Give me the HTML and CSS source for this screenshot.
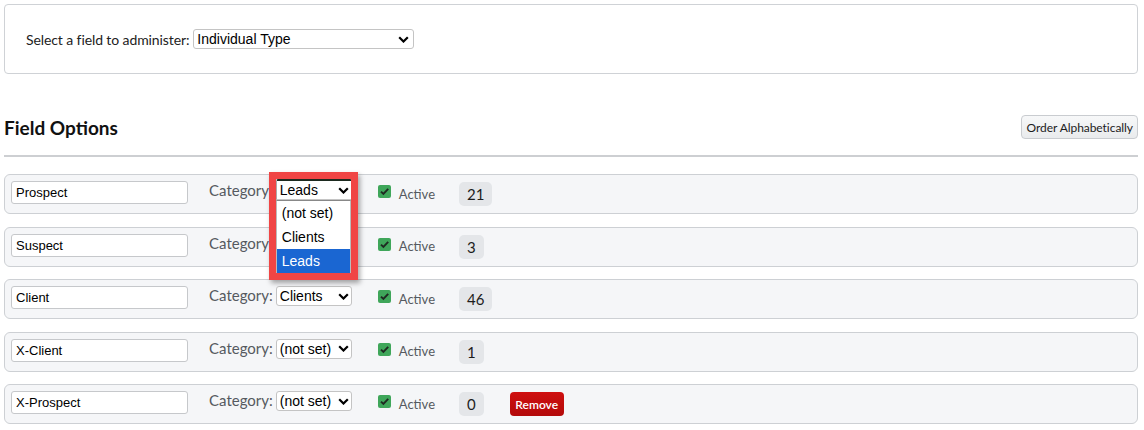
FILE: index.html
```html
<!DOCTYPE html>
<html lang="en">
<head>
<meta charset="utf-8">
<title>Field Options</title>
<link rel="stylesheet" href="styles.css">
</head>
<body>
<div class="page">
  <div class="panel">
    <span class="panel-label">Select a field to administer:</span>
    <div class="select select-wide"><span class="select-text">Individual Type</span><svg class="chev" width="11" height="7" viewBox="0 0 11 7"><path d="M1.2 1.2l4.3 4.3 4.3-4.3" fill="none" stroke="#000" stroke-width="2.2"/></svg></div>
  </div>

  <div class="header">
    <h2 class="title">Field Options</h2>
    <button class="btn">Order Alphabetically</button>
  </div>

  <div class="rows">
    <div class="row">
      <input class="name" type="text" value="Prospect">
      <span class="cat-label">Category:</span>
      <div class="select select-sm open"><span class="select-text">Leads</span><svg class="chev" width="11" height="7" viewBox="0 0 11 7"><path d="M1.2 1.2l4.3 4.3 4.3-4.3" fill="none" stroke="#000" stroke-width="2.2"/></svg>
        <div class="dropdown">
          <div class="dd-head"></div>
          <div class="dd-list">
            <div class="dd-opt">(not set)</div>
            <div class="dd-opt">Clients</div>
            <div class="dd-opt sel">Leads</div>
          </div>
        </div>
      </div>
      <span class="check"><svg width="13" height="13" viewBox="0 0 13 13"><rect x="0" y="0" width="13" height="13" rx="2" fill="#3fa65a"/><path d="M3 6.6l2.4 2.4 4.8-5.2" fill="none" stroke="#1f2a22" stroke-width="1.9"/></svg></span>
      <span class="active">Active</span>
      <span class="badge">21</span>
    </div>

    <div class="row">
      <input class="name" type="text" value="Suspect">
      <span class="cat-label">Category:</span>
      <div class="select select-sm covered"><span class="select-text">Leads</span><svg class="chev" width="11" height="7" viewBox="0 0 11 7"><path d="M1.2 1.2l4.3 4.3 4.3-4.3" fill="none" stroke="#000" stroke-width="2.2"/></svg></div>
      <span class="check"><svg width="13" height="13" viewBox="0 0 13 13"><rect x="0" y="0" width="13" height="13" rx="2" fill="#3fa65a"/><path d="M3 6.6l2.4 2.4 4.8-5.2" fill="none" stroke="#1f2a22" stroke-width="1.9"/></svg></span>
      <span class="active">Active</span>
      <span class="badge">3</span>
    </div>

    <div class="row">
      <input class="name" type="text" value="Client">
      <span class="cat-label">Category:</span>
      <div class="select select-sm"><span class="select-text">Clients</span><svg class="chev" width="11" height="7" viewBox="0 0 11 7"><path d="M1.2 1.2l4.3 4.3 4.3-4.3" fill="none" stroke="#000" stroke-width="2.2"/></svg></div>
      <span class="check"><svg width="13" height="13" viewBox="0 0 13 13"><rect x="0" y="0" width="13" height="13" rx="2" fill="#3fa65a"/><path d="M3 6.6l2.4 2.4 4.8-5.2" fill="none" stroke="#1f2a22" stroke-width="1.9"/></svg></span>
      <span class="active">Active</span>
      <span class="badge">46</span>
    </div>

    <div class="row">
      <input class="name" type="text" value="X-Client">
      <span class="cat-label">Category:</span>
      <div class="select select-sm"><span class="select-text">(not set)</span><svg class="chev" width="11" height="7" viewBox="0 0 11 7"><path d="M1.2 1.2l4.3 4.3 4.3-4.3" fill="none" stroke="#000" stroke-width="2.2"/></svg></div>
      <span class="check"><svg width="13" height="13" viewBox="0 0 13 13"><rect x="0" y="0" width="13" height="13" rx="2" fill="#3fa65a"/><path d="M3 6.6l2.4 2.4 4.8-5.2" fill="none" stroke="#1f2a22" stroke-width="1.9"/></svg></span>
      <span class="active">Active</span>
      <span class="badge">1</span>
    </div>

    <div class="row">
      <input class="name" type="text" value="X-Prospect">
      <span class="cat-label">Category:</span>
      <div class="select select-sm"><span class="select-text">(not set)</span><svg class="chev" width="11" height="7" viewBox="0 0 11 7"><path d="M1.2 1.2l4.3 4.3 4.3-4.3" fill="none" stroke="#000" stroke-width="2.2"/></svg></div>
      <span class="check"><svg width="13" height="13" viewBox="0 0 13 13"><rect x="0" y="0" width="13" height="13" rx="2" fill="#3fa65a"/><path d="M3 6.6l2.4 2.4 4.8-5.2" fill="none" stroke="#1f2a22" stroke-width="1.9"/></svg></span>
      <span class="active">Active</span>
      <span class="badge">0</span>
      <button class="remove">Remove</button>
    </div>
  </div>
</div>
</body>
</html>
```

FILE: styles.css
```css
* { box-sizing: border-box; }

html, body {
  margin: 0;
  padding: 0;
  background: #ffffff;
}

body {
  font-family: "Lato", "Liberation Sans", sans-serif;
  color: #212529;
}

.page {
  padding: 4px 6px 4px 4px;
}

.panel {
  height: 70px;
  border: 1px solid #cfd2d6;
  border-radius: 4px;
  display: flex;
  align-items: center;
  padding: 0 0 0 21px;
  background: #fff;
}

.panel-label {
  font-size: 14px;
  letter-spacing: -0.1px;
  color: #222;
  margin-right: 4px;
}

.select {
  position: relative;
  display: flex;
  align-items: center;
  justify-content: space-between;
  height: 20px;
  background: #fff;
  border: 1px solid #c4c4c4;
  border-radius: 3px;
  padding: 0 4px 0 3px;
  font-family: "Liberation Sans", Arial, sans-serif;
  font-size: 14px;
  color: #000;
}

.select-text {
  white-space: nowrap;
  line-height: 18px;
}

.chev {
  flex: none;
  margin-left: 2px;
}

.select-wide {
  width: 221px;
}

.select-sm {
  width: 76px;
  padding-right: 2px;
  margin-top: -6px;
}

.select-sm.covered {
  visibility: hidden;
}

.header {
  display: flex;
  align-items: flex-start;
  justify-content: space-between;
  height: 83px;
  padding-top: 41px;
  border-bottom: 2px solid #cdcfd2;
}

.title {
  margin: 2px 0 0 0;
  font-size: 19px;
  line-height: 22px;
  font-weight: 700;
  color: #111;
}

.btn {
  height: 24px;
  padding: 0 4px;
  border: 1px solid #c9ccd0;
  border-radius: 4px;
  background: linear-gradient(#f7f8f9, #e9ebed);
  font-family: "Lato", "Liberation Sans", sans-serif;
  font-size: 12px;
  letter-spacing: -0.05px;
  color: #1c1c1c;
}

.rows {
  margin-top: 17px;
  display: flex;
  flex-direction: column;
  gap: 12.5px;
}

.row {
  height: 40px;
  border: 1px solid #cdd0d4;
  border-radius: 6px;
  background: #f5f6f8;
  display: flex;
  align-items: center;
  padding: 0 6px;
}

.name {
  width: 177px;
  height: 23px;
  border: 1px solid #c6c8cb;
  border-radius: 3px;
  background: #fff;
  padding: 0 4px;
  font-family: "Liberation Sans", Arial, sans-serif;
  font-size: 13px;
  color: #000;
  margin: -3px 21px 0 0;
}

.cat-label {
  font-size: 15px;
  color: #555a60;
  margin: -8px 3px 0 0;
}

.check {
  display: flex;
  margin: -5px 8px 0 26px;
}

.active {
  font-size: 13px;
  color: #555a60;
  margin-top: -1px;
}

.badge {
  margin-left: 24px;
  height: 24px;
  padding: 0 8px;
  border-radius: 5px;
  background: #e4e6e9;
  font-size: 15px;
  color: #1d1d1d;
  display: flex;
  align-items: center;
}

.remove {
  margin-left: 26px;
  height: 24px;
  width: 54px;
  padding: 0;
  border: none;
  border-radius: 4px;
  background: linear-gradient(#cf1010, #b30a0a);
  color: #fff;
  font-family: "Lato", "Liberation Sans", sans-serif;
  font-weight: 600;
  font-size: 12px;
}

/* open select with its popup list and the red highlight frame */
.select-sm.open {
  height: 21px;
  margin-top: -9px;
  border-top: 2px solid #1c2a1f;
  border-left-color: #aaa;
  border-right-color: #aaa;
  border-radius: 2px 2px 0 0;
}

.dropdown {
  position: absolute;
  left: -8px;
  top: -9px;
  width: 89px;
  border: 7px solid #f04545;
  box-shadow: 2px 3px 5px rgba(0, 0, 0, 0.35);
  z-index: 5;
}

.dd-head {
  height: 21px;
}

.dd-list {
  background: #fff;
  border-top: 1px solid #888;
  border-left: 1px solid #bbb;
  border-right: 1px solid #bbb;
}

.dd-opt {
  height: 24px;
  line-height: 24px;
  padding-left: 5px;
  font-family: "Liberation Sans", Arial, sans-serif;
  font-size: 14px;
  color: #000;
}

.dd-opt.sel {
  background: #1a66d2;
  color: #fff;
}
```
